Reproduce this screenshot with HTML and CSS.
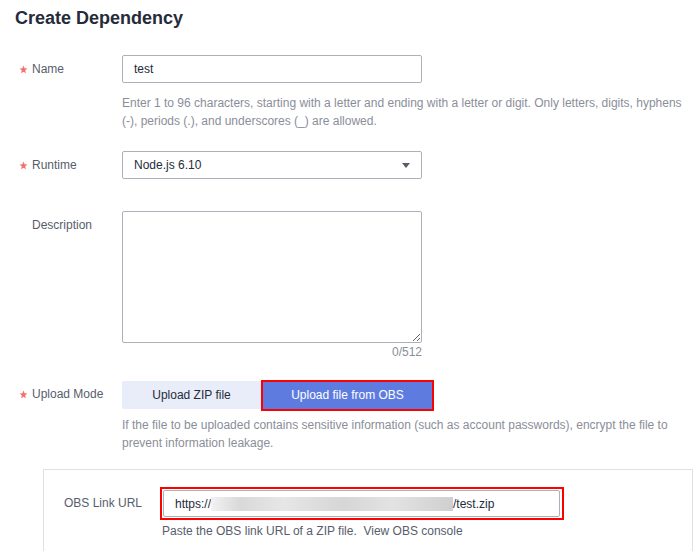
FILE: index.html
```html
<!DOCTYPE html>
<html>
<head>
<meta charset="utf-8">
<link rel="stylesheet" href="styles.css">
</head>
<body>
<div class="page">
  <h1 class="title">Create Dependency</h1>

  <div class="row row-name">
    <div class="label"><span class="star"><svg viewBox="0 0 10 10" width="9" height="9"><path d="M5 0.6 L6.2 3.6 L9.4 3.8 L6.9 5.9 L7.7 9.2 L5 7.4 L2.3 9.2 L3.1 5.9 L0.6 3.8 L3.8 3.6 Z" fill="#f66f6a"/></svg></span>Name</div>
    <div class="control">
      <div class="input"><span class="value">test</span></div>
      <p class="hint hint-name">Enter 1 to 96 characters, starting with a letter and ending with a letter or digit. Only letters, digits, hyphens (-), periods (.), and underscores (_) are allowed.</p>
    </div>
  </div>

  <div class="row row-runtime">
    <div class="label"><span class="star"><svg viewBox="0 0 10 10" width="9" height="9"><path d="M5 0.6 L6.2 3.6 L9.4 3.8 L6.9 5.9 L7.7 9.2 L5 7.4 L2.3 9.2 L3.1 5.9 L0.6 3.8 L3.8 3.6 Z" fill="#f66f6a"/></svg></span>Runtime</div>
    <div class="control">
      <div class="input select"><span class="value">Node.js 6.10</span><span class="caret"></span></div>
    </div>
  </div>

  <div class="row row-desc">
    <div class="label"><span class="star"></span>Description</div>
    <div class="control">
      <textarea class="textarea"></textarea>
      <div class="counter">0/512</div>
    </div>
  </div>

  <div class="row row-upload">
    <div class="label label-upload"><span class="star"><svg viewBox="0 0 10 10" width="9" height="9"><path d="M5 0.6 L6.2 3.6 L9.4 3.8 L6.9 5.9 L7.7 9.2 L5 7.4 L2.3 9.2 L3.1 5.9 L0.6 3.8 L3.8 3.6 Z" fill="#f66f6a"/></svg></span>Upload Mode</div>
    <div class="control control-wide">
      <div class="btn-group">
        <div class="btn btn-light">Upload ZIP file</div>
        <div class="btn btn-primary">Upload file from OBS</div>
      </div>
      <p class="hint hint-upload">If the file to be uploaded contains sensitive information (such as account passwords), encrypt the file to prevent information leakage.</p>
    </div>
  </div>

  <div class="panel">
    <div class="panel-row">
      <div class="panel-label">OBS Link URL</div>
      <div class="panel-control">
        <div class="highlight">
          <div class="input url-input"><span class="value">https://</span><span class="blur"></span><span class="value">/test.zip</span></div>
        </div>
        <p class="panel-hint">Paste the OBS link URL of a ZIP file.&nbsp; View OBS console</p>
      </div>
    </div>
  </div>
</div>
</body>
</html>
```
FILE: styles.css
```css
html, body {
  margin: 0;
  padding: 0;
  background: #ffffff;
  overflow: hidden;
}

body {
  font-family: "Liberation Sans", Arial, sans-serif;
  font-size: 12px;
  color: #575d6c;
}

.page {
  padding: 6px 0 0 15px;
  width: 680px;
  height: 545px;
  overflow: hidden;
}

.title {
  margin: 0;
  font-size: 18px;
  line-height: 24px;
  font-weight: bold;
  color: #252b3a;
}

.row {
  display: grid;
  grid-template-columns: 107px 1fr;
}

.row-name { margin-top: 25px; }
.row-runtime { margin-top: 21px; }
.row-desc { margin-top: 32px; }
.row-upload { margin-top: 19px; }

.label {
  padding-left: 4px;
  line-height: 27px;
  color: #575d6c;
  white-space: nowrap;
  display: flex;
  align-items: center;
  height: 28px;
}

.label-upload {
  height: 29px;
}

.star {
  display: inline-flex;
  align-items: center;
  width: 13px;
  height: 9px;
}

.star svg {
  display: block;
}

.control {
  width: 300px;
}

.control-wide {
  width: 565px;
}

.input {
  box-sizing: border-box;
  height: 28px;
  border: 1px solid #adb0b8;
  border-radius: 2px;
  padding: 0 11px;
  display: flex;
  align-items: center;
  color: #252b3a;
  font-size: 12px;
  background: #fff;
}

.select {
  justify-content: space-between;
}

.caret {
  width: 0;
  height: 0;
  border-left: 4px solid transparent;
  border-right: 4px solid transparent;
  border-top: 5px solid #575d6c;
}

.hint {
  margin: 11px 0 0;
  width: 565px;
  line-height: 18px;
  color: #8a8e99;
}

.hint-upload {
  margin-top: 6px;
}

.textarea {
  display: block;
  box-sizing: border-box;
  width: 300px;
  height: 132px;
  margin: 0;
  border: 1px solid #adb0b8;
  border-radius: 2px;
  padding: 4px 8px;
  font-family: inherit;
  font-size: 12px;
  resize: vertical;
  outline: none;
}

.counter {
  text-align: right;
  line-height: 18px;
  color: #8a8e99;
}

.btn-group {
  display: flex;
  align-items: center;
  height: 30px;
}

.btn {
  box-sizing: border-box;
  display: flex;
  align-items: center;
  justify-content: center;
  font-size: 12px;
}

.btn-light {
  width: 139px;
  height: 28px;
  background: #e9edfa;
  color: #252b3a;
  border-radius: 2px 0 0 2px;
}

.btn-primary {
  width: 173px;
  height: 31px;
  background: #5e7ce0;
  color: #ffffff;
  border: 2px solid #ff0000;
}

.panel {
  margin-top: 17px;
  margin-left: 28px;
  width: 650px;
  height: 90px;
  border: 1px solid #dfe1e6;
  box-sizing: border-box;
  padding: 17px 0 0 20px;
}

.panel-row {
  display: flex;
}

.panel-label {
  width: 96px;
  line-height: 33px;
  color: #575d6c;
  white-space: nowrap;
}

.panel-control {
  width: 404px;
}

.highlight {
  box-sizing: border-box;
  width: 404px;
  height: 33px;
  border: 2px solid #ff0000;
  padding: 1px 2px 1px 1px;
}

.url-input {
  height: 27px;
  padding-left: 11px;
}

.blur {
  display: inline-block;
  width: 242px;
  height: 14px;
  background: linear-gradient(90deg, #f2f2f2 0%, #d9d9d9 12%, #e6e6e6 30%, #d6d6d6 55%, #e3e3e3 75%, #cfcfcf 100%);
}

.panel-hint {
  margin: 2px 0 0 2px;
  line-height: 18px;
  color: #575d6c;
  white-space: nowrap;
}
```
